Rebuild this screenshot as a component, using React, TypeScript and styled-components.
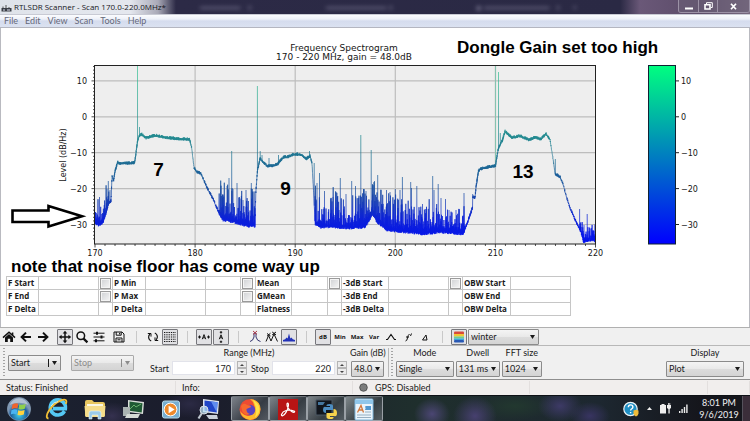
import React, { ReactNode } from "react";
import styled, { createGlobalStyle, css } from "styled-components";

const GlobalStyle = createGlobalStyle`
  * { box-sizing: border-box; }
  body { margin: 0; background: #fff; font-family: Lato, "Open Sans", sans-serif; font-size: 9px; color: #1a1a1a; }
  button, input, select { font: inherit; color: inherit; }
`;

/* ---------- shell ---------- */

const Shell = styled.div`
  display: flex;
  flex-direction: column;
  min-height: 100vh;
`;

const TitleBar = styled.header`
  position: relative;
  display: flex;
  align-items: center;
  height: 15px;
  overflow: hidden;
  background: linear-gradient(90deg, #dfe3ea 0, #e4e7ee 130px, #a9a9b7 158px, #2c2a46 176px, #2a2944 620px, #6a5878 640px, #5b4b68 700px, #77687e 100%);
  border-bottom: 1px solid #c8cad4;
`;

const AppTitle = styled.h1`
  position: relative;
  display: flex;
  align-items: center;
  gap: 2px;
  margin: 0 0 0 1px;
  font: 400 8px "Open Sans", "Noto Sans", sans-serif;
  line-height: 14px;
  color: #16161c;
  white-space: nowrap;
`;

const Backdrop = styled.div`
  position: absolute;
  inset: 0;
  display: grid;
  grid-template-columns: 200px 126px 150px 1fr;
  align-items: center;
  color: #a9a6c0;
  filter: blur(2px);
  opacity: 0.65;
  white-space: nowrap;
`;

const WindowButtons = styled.div`
  position: relative;
  display: flex;
  align-self: flex-start;
  margin-left: auto;
  height: 13px;
  border: 1px solid #9c92a6;
  border-top: 0;
  border-radius: 0 0 3px 3px;
`;

const WindowButton = styled.button<{ $wide?: boolean }>`
  display: grid;
  place-items: center;
  width: ${(p) => (p.$wide ? 32 : 19)}px;
  padding: 0;
  border: 0;
  border-left: 1px solid #9c92a6;
  background: rgba(110, 100, 122, 0.5);
  color: #fff;
  &:first-child { border-left: 0; }
`;

const MenuBar = styled.nav`
  display: flex;
  gap: 7px;
  align-items: center;
  height: 13px;
  padding-left: 4px;
  background: linear-gradient(#fbfcfe 0, #eef1f9 4px, #d5dcee 6px, #dbe2f1 100%);
  border-bottom: 1px solid #b4b6c0;
`;

const MenuItem = styled.button`
  padding: 0;
  border: 0;
  background: none;
  line-height: 12px;
  color: #66697a;
`;

const Main = styled.main`
  display: flex;
  flex-direction: column;
  flex: 1;
  padding-bottom: 11px;
  box-shadow: inset 1px 0 #b9bac0, inset -1px 0 #b9bac0;
`;

/* ---------- spectrum chart ---------- */

const Chart = styled.svg`
  display: block;
  width: 100%;
  height: auto;
  font-family: "DejaVu Sans", sans-serif;
  fill: #151515;
  .tick { font-size: 8px; }
  .title { font-size: 9px; }
  .note { font-family: "Liberation Sans", Arial, sans-serif; font-weight: 700; fill: #000; }
`;

const envelope: [number, number][] = [
  [95, 222], [98, 224], [102, 223], [105, 216], [108, 204], [111, 201], [112, 176], [113.5, 181], [115, 171],
  [117.7, 162], [119, 163.5], [134.5, 163], [136, 153], [137.5, 141], [139, 136.5], [141.5, 134.5], [146, 138],
  [155, 135.5], [165, 137.5], [177, 139], [189.5, 139.5], [191.5, 147], [194, 168], [197, 172], [201, 174],
  [207, 188], [213, 199], [218, 211], [223, 219], [230, 220], [240, 223], [248, 225], [255, 225], [255.7, 193],
  [257.5, 170], [260, 159], [263, 162], [267, 166], [273, 166], [278, 164], [280, 161], [284, 157], [288, 157],
  [293, 154.5], [300, 154.5], [304, 157], [306.5, 159], [310, 156], [312, 164], [314, 200], [315, 223], [320, 226],
  [330, 226], [350, 227], [365, 226], [370, 218], [372.5, 213], [377, 221], [387, 229], [405, 231], [423, 233],
  [440, 231], [463, 233], [467, 224], [470, 215], [472.5, 208], [472.7, 197], [475, 198], [476, 187], [478.5, 171],
  [481, 169], [487, 167.5], [495.5, 166], [497, 156], [498.5, 148], [502.5, 140], [505, 131.5], [508, 134],
  [511.5, 138], [519.5, 136], [529, 140], [535.5, 137.5], [540.5, 139.5], [546, 134], [550, 140], [552.7, 157],
  [555, 174], [560, 177], [563, 184], [565, 192], [567, 199], [570, 208], [576.5, 223], [580.5, 231], [583.5, 241],
  [589, 239], [595.5, 240],
];

const spikes: [number, number][] = [
  [99.5, 197], [107, 189], [108.3, 181], [110, 190], [137.5, 66], [139.5, 127], [222.5, 198], [227, 186], [229, 178],
  [231.7, 151], [233, 189], [237, 183], [243, 200], [246, 190], [251.3, 183], [252.5, 189], [257.4, 86], [260.2, 151],
  [262, 155], [269, 158], [278.5, 155], [309.5, 151], [314.2, 163], [317, 183], [319.5, 173], [324.5, 191],
  [333, 197], [336, 192], [340.3, 178], [346, 194], [351.7, 181], [355.5, 186], [360.8, 135], [366, 191], [371.2, 150],
  [374.5, 181], [377.7, 175], [381, 190], [386.5, 190], [390, 192], [395.3, 189], [400, 190], [402.4, 177],
  [410.7, 182], [411.5, 188], [416.8, 186], [422.5, 204], [432.7, 176], [434, 190], [438.2, 184], [441, 198],
  [445.5, 199], [449, 210], [456, 210], [464, 193], [472.7, 194], [498.5, 72], [500.3, 133], [555.3, 159],
  [579.6, 209], [584, 225], [587.2, 214], [591, 229], [594, 231],
];

const noiseZones: [number, number, number][] = [
  [95, 109, 17], [219, 255, 24], [315, 400, 25], [400, 440, 22], [440, 465, 17], [580, 596, 10],
];

function baseAt(x: number) {
  for (let i = 1; i < envelope.length; i++) {
    const [x0, y0] = envelope[i - 1];
    const [x1, y1] = envelope[i];
    if (x <= x1) return y0 + ((y1 - y0) * (x - x0)) / (x1 - x0);
  }
  return 240;
}

function buildTrace() {
  let seed = 1907;
  const rand = () => {
    seed = (seed * 16807) % 2147483647;
    return seed / 2147483647;
  };
  const parts: string[] = [];
  for (let x = 95; x <= 595.5; x += 0.3) {
    const base = baseAt(x);
    const zone = noiseZones.find(([a, b]) => x >= a && x < b);
    const lift = zone ? Math.pow(rand(), 3.6) * zone[2] * 1.4 + rand() * 5 : rand() * 2;
    const drop = zone ? rand() * 2.5 : rand() * 1.4;
    parts.push(`${x.toFixed(1)},${(base - lift).toFixed(1)} ${(x + 0.1).toFixed(1)},${(base + drop).toFixed(1)}`);
  }
  return parts.join(" ");
}

const trace = buildTrace();
const levels = [10, 0, -10, -20, -30];
const levelY = (v: number) => 116.8 - v * 3.59;
const freqX = (f: number) => 95 + (f - 170) * 10.01;
const minus = (v: number) => String(v).replace("-", "\u2212");

function SpectrumChart() {
  const minorX = Array.from({ length: 51 }, (_, i) => 170 + i);
  const minorY = Array.from({ length: 49 }, (_, i) => 14 - i);
  return (
    <Chart viewBox="0 28 750 248" role="img" aria-label="Frequency spectrogram, 170 to 220 MHz">
      <defs>
        <linearGradient id="scale" x1="0" y1="0" x2="0" y2="1">
          <stop offset="0" stopColor="#00ff80" />
          <stop offset="1" stopColor="#0000ff" />
        </linearGradient>
        <linearGradient id="trace" gradientUnits="userSpaceOnUse" x1="0" y1="65" x2="0" y2="244">
          <stop offset="0" stopColor="#3cc796" />
          <stop offset="0.4" stopColor="#21898f" />
          <stop offset="0.55" stopColor="#1b6a92" />
          <stop offset="0.72" stopColor="#1647a4" />
          <stop offset="0.86" stopColor="#0a1fd8" />
          <stop offset="1" stopColor="#0210f0" />
        </linearGradient>
      </defs>

      <rect x="94.5" y="65.5" width="501" height="178.5" fill="#eeeeee" />
      <g stroke="#bdbdbd" strokeWidth="1.2">
        {[180, 190, 200, 210].map((f) => <line key={f} x1={freqX(f)} x2={freqX(f)} y1="66" y2="244" />)}
        {levels.map((v) => <line key={v} x1="95" x2="595" y1={levelY(v)} y2={levelY(v)} />)}
      </g>
      <line x1="495.6" x2="495.6" y1="66" y2="166" stroke="#7fc4ae" />
      <g stroke="url(#trace)" fill="none">
        <g strokeWidth="0.9" opacity="0.8">
          {spikes.map(([x, y]) => (
            <path key={x} d={`M${x} ${y}L${x + 0.05} ${baseAt(x) + 1}`} />
          ))}
        </g>
        <polyline points={trace} strokeWidth="0.7" />
      </g>
      <g stroke="#222" strokeWidth="0.8">
        {minorX.map((f) => <line key={f} x1={freqX(f)} x2={freqX(f)} y1="244" y2={f % 10 ? 246 : 247.5} />)}
        {minorY.map((v) => <line key={v} x1={v % 10 ? 93 : 91.5} x2="95" y1={levelY(v)} y2={levelY(v)} />)}
      </g>
      <rect x="94.5" y="65.5" width="501" height="178.5" fill="none" stroke="#222" />

      <g className="tick" textAnchor="end">
        {levels.map((v) => <text key={v} x="87" y={levelY(v) + 3}>{minus(v)}</text>)}
      </g>
      <g className="tick" textAnchor="middle">
        {[170, 180, 190, 200, 210, 220].map((f) => <text key={f} x={freqX(f)} y="256">{f}</text>)}
        <text transform="translate(66 155) rotate(-90)">Level (dB/Hz)</text>
      </g>
      <g className="title" textAnchor="middle">
        <text x="344" y="51">Frequency Spectrogram</text>
        <text x="344" y="60">170 - 220 MHz, gain = 48.0dB</text>
      </g>

      <rect x="648.5" y="65.5" width="27" height="178.5" fill="url(#scale)" stroke="#123" />
      {levels.map((v) => (
        <g key={v} className="tick">
          <line x1="676" x2="679" y1={levelY(v)} y2={levelY(v)} stroke="#222" />
          <text x="681" y={levelY(v) + 3}>{minus(v)}</text>
        </g>
      ))}

      <g className="note">
        <text x="457" y="53" fontSize="17">Dongle Gain set too high</text>
        <text x="11" y="272" fontSize="17">note that noise floor has come way up</text>
        <text x="158.5" y="176" fontSize="19" textAnchor="middle">7</text>
        <text x="285.5" y="195" fontSize="19" textAnchor="middle">9</text>
        <text x="523" y="178" fontSize="19" textAnchor="middle">13</text>
      </g>
      <path d="M12.5 210.5H48.5V206L82 216.3L48.5 226.5V222H12.5Z" fill="none" stroke="#000" strokeWidth="2.6" />
    </Chart>
  );
}

/* ---------- measurement table ---------- */

const MeasureTable = styled.table`
  table-layout: fixed;
  width: 564px;
  margin-left: 6px;
  border-collapse: collapse;
  font: 700 8px "Open Sans", "Noto Sans", sans-serif;
  line-height: 10px;
  td, th { height: 13px; padding: 0 0 0 1px; border: 1px solid #c6c6c6; text-align: left; white-space: nowrap; }
`;

const Check = styled.input`
  display: block;
  appearance: none;
  width: 11px;
  height: 11px;
  margin: 0;
  border: 1px solid #9a9a9a;
  background: linear-gradient(135deg, #cfd1d4, #f6f6f6);
  box-shadow: inset 0 0 0 1px #f4f4f4;
`;

const columns = [32, 60, 14, 33, 60, 35, 15, 36, 36, 14, 47, 60, 14, 48, 60];
const measures: { name: string; check: boolean }[][] = [
  [{ name: "F Start", check: false }, { name: "P Min", check: true }, { name: "Mean", check: true }, { name: "-3dB Start", check: true }, { name: "OBW Start", check: true }],
  [{ name: "F End", check: false }, { name: "P Max", check: true }, { name: "GMean", check: true }, { name: "-3dB End", check: false }, { name: "OBW End", check: false }],
  [{ name: "F Delta", check: false }, { name: "P Delta", check: false }, { name: "Flatness", check: false }, { name: "-3dB Delta", check: false }, { name: "OBW Delta", check: false }],
];

function Measurements() {
  return (
    <MeasureTable>
      <colgroup>{columns.map((w, i) => <col key={i} style={{ width: w }} />)}</colgroup>
      <tbody>
        {measures.map((row) => (
          <tr key={row[0].name}>
            {row.map((m, i) => (
              <React.Fragment key={m.name}>
                {i > 0 && <td>{m.check && <Check type="checkbox" aria-label={m.name} />}</td>}
                <th scope="row">{m.name}</th>
                <td />
                {i === 1 && <td />}
              </React.Fragment>
            ))}
          </tr>
        ))}
      </tbody>
    </MeasureTable>
  );
}

/* ---------- tool bar ---------- */

const ToolBar = styled.div`
  display: flex;
  align-items: center;
  gap: 1px;
  height: 18px;
  padding-left: 1px;
  background: #f0f0f0;
  border-top: 1px solid #b0b0b0;
`;

const ToolButton = styled.button<{ $on?: boolean }>`
  display: grid;
  place-items: center;
  width: 16px;
  height: 16px;
  padding: 0;
  border: 1px solid transparent;
  background: none;
  color: #111;
  font: 700 6px "Open Sans", "Noto Sans", sans-serif;
  line-height: 8px;
  ${(p) => p.$on && css`
    border-color: #77777c;
    border-radius: 1px;
    background: #e1e1e4;
  `}
`;

const Spacer = styled.span<{ $w: number }>`
  width: ${(p) => p.$w}px;
`;

const Divider = styled.span`
  width: 16px;
  height: 12px;
  background: linear-gradient(#c9c9c9, #c9c9c9) center / 1px 100% no-repeat;
`;

const SelectBox = styled.span<{ $w: number }>`
  position: relative;
  display: block;
  width: ${(p) => p.$w}px;
  select {
    appearance: none;
    display: block;
    width: 100%;
    height: 16px;
    padding: 0 0 0 2px;
    border: 1px solid #8b8b8b;
    border-radius: 1px;
    background: linear-gradient(#f4f4f4, #e9e9e9 50%, #dcdcdc 51%, #d4d4d4);
    line-height: 14px;
  }
  svg { position: absolute; right: 4px; top: 6px; pointer-events: none; }
`;

function Caret() {
  return <svg width="5" height="4" viewBox="0 0 5 4"><path d="M0 0H5L2.5 4Z" fill="currentColor" /></svg>;
}

function Picker({ id, label, value, width }: { id: string; label?: string; value: string; width: number }) {
  return (
    <SelectBox $w={width}>
      <select id={id} aria-label={label} defaultValue={value}><option>{value}</option></select>
      <Caret />
    </SelectBox>
  );
}

function Glyph({ children }: { children: ReactNode }) {
  return <svg width="14" height="14" viewBox="0 0 14 14" fill="none" stroke="currentColor">{children}</svg>;
}

function Tools() {
  return (
    <ToolBar role="toolbar" aria-label="Plot tools">
      <ToolButton aria-label="Home"><Glyph><path d="M1 7.6 7 2.2 13 7.6M10.6 2.5V5" strokeWidth="1.5" /><path d="M3 7.6 7 4 11 7.6V12H8.2V8.8H5.8V12H3Z" fill="currentColor" stroke="none" /></Glyph></ToolButton>
      <ToolButton aria-label="Back"><Glyph><path d="M12 7H3M7 2.6 2.6 7 7 11.4" strokeWidth="2" /></Glyph></ToolButton>
      <ToolButton aria-label="Forward"><Glyph><path d="M2 7H11M7 2.6 11.4 7 7 11.4" strokeWidth="2" /></Glyph></ToolButton>
      <Spacer $w={4} />
      <ToolButton $on aria-label="Pan"><Glyph><path d="M7 3V11M3 7H11" strokeWidth="1.5" /><path d="M7 .8 9.3 3.6H4.7ZM7 13.2 9.3 10.4H4.7ZM.8 7 3.6 4.7V9.3ZM13.2 7 10.4 4.7V9.3Z" fill="currentColor" stroke="none" /></Glyph></ToolButton>
      <ToolButton aria-label="Zoom"><Glyph><circle cx="5.8" cy="5.8" r="3.8" strokeWidth="1.5" /><path d="M8.6 8.6 12.4 12.4" strokeWidth="2.2" /></Glyph></ToolButton>
      <ToolButton aria-label="Configure"><Glyph><path d="M1.5 3.2H12.5M1.5 7H12.5M1.5 10.8H12.5" /><path d="M5 1.7V4.7M9.5 5.5V8.5M4 9.3V12.3" strokeWidth="2" /></Glyph></ToolButton>
      <Spacer $w={2} />
      <ToolButton aria-label="Save"><Glyph><path d="M2 2H10L12 4V12H2ZM4.2 2V5.2H9.2V2M4 12V8H10V12M7.6 2.8V4.4M5.5 9.8H8.5" /></Glyph></ToolButton>
      <Divider />
      <ToolButton aria-label="Refresh"><Glyph><path d="M4 4A4.2 4.2 0 0 0 5.2 11M10 10A4.2 4.2 0 0 0 8.8 3" strokeWidth="1.2" /><path d="M1.8 3.5H5V6.6M12.2 10.5H9V7.4" /></Glyph></ToolButton>
      <ToolButton $on aria-label="Grid"><Glyph><path d="M1 2.5H13M1 4.8H13M1 7H13M1 9.3H13M1 11.5H13" strokeDasharray="1.3 1" /></Glyph></ToolButton>
      <Divider />
      <ToolButton $on aria-label="Auto range horizontally"><Glyph><path d="M1 7H4M10 7H13M2.5 5.5V8.5M11.5 5.5V8.5M5.3 9.2 7 4.6 8.7 9.2M6 7.8H8" /></Glyph></ToolButton>
      <ToolButton $on aria-label="Auto range vertically"><Glyph><path d="M5.3 9.2 7 4.8 8.7 9.2M6 7.8H8M7 1V3.6M5.8 2.3H8.2M7 10.6V13M5.8 11.8H8.2" /></Glyph></ToolButton>
      <Divider />
      <ToolButton aria-label="Peak"><Glyph><path d="M2 11.5Q5 11 6 7V3H8V7Q9 11 12.5 11.5" stroke="#34346e" /><path d="M5 1 9 4.5M9 1 5 4.5" stroke="#b03c4c" /></Glyph></ToolButton>
      <ToolButton aria-label="Peaks"><Glyph><path d="M1 11.5 3.6 5.5 6 11 9 4 12.5 11.5M2 3.5 5.5 6M5.5 3.2 2 6.2M7.2 2 11 4.8M11 2 7.2 4.8" /></Glyph></ToolButton>
      <ToolButton $on aria-label="Fill"><Glyph><path d="M1 11.5V10Q3.5 9.8 4.6 7.5L5.6 8.6 7 3.6 8.4 8.6 9.4 7.5Q10.5 9.8 13 10V11.5Z" fill="#2232b8" stroke="none" /></Glyph></ToolButton>
      <Divider />
      <ToolButton $on>dB</ToolButton>
      <ToolButton>Min</ToolButton>
      <ToolButton>Max</ToolButton>
      <ToolButton>Var</ToolButton>
      <ToolButton aria-label="Smooth"><Glyph><path d="M2 9.5H3.5L7 4.5 10.5 9.5H12" strokeWidth="1.2" /></Glyph></ToolButton>
      <ToolButton aria-label="Differentiate"><Glyph><path d="M4.5 11Q6 11 6.5 8T8.5 4M5 7H8M10.5 3.5 9.5 6" /></Glyph></ToolButton>
      <ToolButton aria-label="Delta"><Glyph><path d="M4.5 10 8 5 9 10Z" /></Glyph></ToolButton>
      <Divider />
      <ToolButton $on aria-label="Colour map">
        <Glyph>
          <rect x="2" y="1.5" width="10" height="3" rx="1" fill="#d84a3a" stroke="none" />
          <rect x="2" y="4" width="10" height="2.5" fill="#f2c636" stroke="none" />
          <rect x="2" y="6.5" width="10" height="2" fill="#6fd08c" stroke="none" />
          <rect x="2" y="8.5" width="10" height="1.6" fill="#39a7dc" stroke="none" />
          <rect x="2" y="10" width="10" height="2.4" rx="1" fill="#2858b4" stroke="none" />
        </Glyph>
      </ToolButton>
      <Picker id="cmap" label="Colour map name" value="winter" width={71} />
    </ToolBar>
  );
}

/* ---------- scan controls ---------- */

const Controls = styled.div`
  display: flex;
  align-items: stretch;
  height: 35px;
  padding-right: 6px;
  background: #f0f0f0;
  border-top: 1px solid #b8b8b8;
  border-bottom: 1px solid #8e8e8e;
`;

const Grip = styled.span<{ $line?: boolean }>`
  width: 6px;
  margin: 2px 0;
  border-left: 1px solid ${(p) => (p.$line ? "#b8b8b8" : "transparent")};
  background: repeating-linear-gradient(#a4a4a4 0 1px, transparent 1px 3px) 2px 0 / 2px 100% no-repeat;
`;

const SplitButton = styled.button<{ $w: number }>`
  display: flex;
  align-items: center;
  align-self: center;
  width: ${(p) => p.$w}px;
  height: 16px;
  margin: 0 8px 0 2px;
  padding: 0 3px 0 2px;
  border: 1px solid #8b8b8b;
  border-radius: 1px;
  background: linear-gradient(#f4f4f4, #e9e9e9 50%, #dcdcdc 51%, #d4d4d4);
  line-height: 14px;
  &:disabled { color: #8c8c8c; border-color: #a9a9a9; }
  i { width: 1px; height: 8px; margin: 0 3px 0 auto; background: currentColor; }
`;

const Field = styled.div<{ $push?: boolean }>`
  display: flex;
  flex-direction: column;
  gap: 3px;
  align-items: center;
  margin-left: ${(p) => (p.$push ? "auto" : "2px")};
  padding-top: 1px;
  line-height: 11px;
  white-space: nowrap;
`;

const RangeGroup = styled.div`
  display: flex;
  flex-direction: column;
  gap: 3px;
  margin-left: 8px;
  padding-top: 1px;
  line-height: 11px;
`;

const RangeTitle = styled.span`
  align-self: center;
`;

const RangeRow = styled.div`
  display: flex;
  align-items: center;
  gap: 3px;
`;

const NumberBox = styled.span`
  display: flex;
  align-items: center;
  gap: 2px;
  margin-right: 1px;
  input {
    width: 63px;
    height: 14px;
    padding: 0 3px;
    border: 1px solid #e2e3ea;
    background: #fff;
    text-align: right;
  }
`;

const Spin = styled.span`
  display: flex;
  flex-direction: column;
  button {
    display: grid;
    place-items: center;
    width: 10px;
    height: 7px;
    padding: 0;
    border: 1px solid #b5b5b5;
    background: #ececec;
    color: #444;
  }
`;

function SpinField({ id, label, value }: { id: string; label: string; value: string }) {
  return (
    <>
      <label htmlFor={id}>{label}</label>
      <NumberBox>
        <input id={id} type="text" inputMode="numeric" defaultValue={value} />
        <Spin>
          <button aria-label={`${label} up`}><svg width="4" height="2" viewBox="0 0 4 2"><path d="M0 2H4L2 0Z" fill="currentColor" /></svg></button>
          <button aria-label={`${label} down`}><svg width="4" height="2" viewBox="0 0 4 2"><path d="M0 0H4L2 2Z" fill="currentColor" /></svg></button>
        </Spin>
      </NumberBox>
    </>
  );
}

function LabelledPicker({ id, label, value, width, push }: { id: string; label: string; value: string; width: number; push?: boolean }) {
  return (
    <Field $push={push}>
      <label htmlFor={id}>{label}</label>
      <Picker id={id} value={value} width={width} />
    </Field>
  );
}

function ScanControls() {
  return (
    <Controls>
      <Grip />
      <SplitButton $w={53}>Start<i /><Caret /></SplitButton>
      <SplitButton $w={63} disabled>Stop<i /><Caret /></SplitButton>
      <RangeGroup role="group" aria-label="Range (MHz)">
        <RangeTitle>Range (MHz)</RangeTitle>
        <RangeRow>
          <SpinField id="from" label="Start" value="170" />
          <SpinField id="to" label="Stop" value="220" />
        </RangeRow>
      </RangeGroup>
      <LabelledPicker id="gain" label="Gain (dB)" value="48.0" width={33} />
      <Spacer $w={2} />
      <Grip $line />
      <LabelledPicker id="mode" label="Mode" value="Single" width={58} />
      <LabelledPicker id="dwell" label="Dwell" value="131 ms" width={44} />
      <LabelledPicker id="fft" label="FFT size" value="1024" width={40} />
      <LabelledPicker id="display" label="Display" value="Plot" width={78} push />
    </Controls>
  );
}

/* ---------- status bar ---------- */

const StatusBar = styled.footer`
  display: grid;
  grid-template-columns: 176px 177px 177px 1fr 42px;
  align-items: center;
  height: 15px;
  background: #f1eeed;
  line-height: 13px;
  > span { display: flex; align-items: center; gap: 7px; height: 13px; padding-left: 6px; border-right: 1px solid #e3dfde; }
`;

/* ---------- task bar ---------- */

const TaskBar = styled.div`
  display: flex;
  align-items: center;
  height: 26px;
  overflow: hidden;
  background:
    radial-gradient(ellipse 18px 16px at 432px 18px, #4b4673, transparent),
    radial-gradient(ellipse 22px 20px at 475px 20px, #47406f, transparent),
    radial-gradient(ellipse 22px 16px at 560px 10px, #3d3a66, transparent),
    radial-gradient(ellipse 20px 14px at 590px 20px, #383461, transparent),
    radial-gradient(ellipse 20px 14px at 112px 20px, #35314f, transparent),
    radial-gradient(ellipse 26px 14px at 190px 8px, #2b2a44, transparent),
    radial-gradient(ellipse 40px 14px at 515px 10px, #22382f, transparent),
    linear-gradient(90deg, #1b2230, #1b1c2c 200px, #1f2f2d 420px, #1d2730 600px, #15161c 700px);
  border-top: 1px solid #0e1116;
`;

const TaskButton = styled.button<{ $open?: boolean }>`
  display: grid;
  place-items: center;
  width: 38px;
  height: 25px;
  padding: 0;
  border: 0;
  background: none;
  ${(p) => p.$open && css`
    border: 1px solid #9aa0a6;
    border-radius: 2px;
    border-top-color: #6d7277;
    background: linear-gradient(135deg, rgba(190, 196, 200, 0.6), rgba(70, 76, 82, 0.6) 60%, rgba(120, 126, 132, 0.6));
  `}
`;

const Tray = styled.div`
  display: flex;
  align-items: center;
  gap: 8px;
  height: 100%;
  margin-left: auto;
  color: #eee;
`;

const Clock = styled.time`
  display: flex;
  flex-direction: column;
  align-items: center;
  width: 46px;
  line-height: 12px;
  color: #f0f0f2;
`;

const ShowDesktop = styled.button`
  width: 8px;
  height: 100%;
  padding: 0;
  border: 0;
  border-left: 1px solid #55525c;
  background: #3b2e3a;
`;

function TaskIcon({ children }: { children: ReactNode }) {
  return <svg width="24" height="24" viewBox="0 0 24 24">{children}</svg>;
}

function Tasks() {
  return (
    <TaskBar>
      <TaskButton aria-label="Start menu">
        <TaskIcon>
          <defs><radialGradient id="orb" cy=".75"><stop offset="0" stopColor="#3fd0ee" /><stop offset=".7" stopColor="#1d5f9e" /><stop offset="1" stopColor="#7d97b4" /></radialGradient></defs>
          <circle cx="12" cy="12" r="11.6" fill="url(#orb)" stroke="#8fa6bd" strokeWidth=".6" />
          <path d="M5.5 7.5Q8.5 5.5 11.3 6.8L10.5 11.6Q7.5 10.5 4.6 12.2Z" fill="#f0632c" />
          <path d="M12.3 7.2Q15.5 8.5 18.8 7L17.8 11.8Q14.8 13.2 11.5 12Z" fill="#8fd04b" />
          <path d="M4.4 13.2Q7.4 11.6 10.3 12.8L9.5 17.4Q6.5 16.2 3.8 17.5Z" fill="#4ab4f2" />
          <path d="M11.3 13.2Q14.6 14.3 17.6 13L16.8 17.6Q13.6 19 10.5 17.8Z" fill="#ffd23e" />
          <path d="M2.5 8Q6 1.4 12 1.3T21.5 8Q12 3.6 2.5 8Z" fill="#fff" opacity=".4" />
        </TaskIcon>
      </TaskButton>
      <TaskButton aria-label="Internet Explorer">
        <TaskIcon>
          <path d="M19.5 14.2A7.6 7.6 0 1 1 20.4 11.6H8" fill="none" stroke="#55c8f4" strokeWidth="3.6" />
          <path d="M3.5 21.5C-2 20.5 6.5 7.2 15 3.8 20.5 1.6 22.5 2.8 20.8 7" fill="none" stroke="#f1bf36" strokeWidth="1.8" />
          <path d="M6 9Q8 5 13 4.6" stroke="#c9f0fc" fill="none" />
        </TaskIcon>
      </TaskButton>
      <TaskButton aria-label="File Explorer">
        <TaskIcon>
          <path d="M2 5Q2 3 4 3H9L11 5H20Q22 5 22 7V19H2Z" fill="#e9c760" />
          <path d="M4 7H20V12H4Z" fill="#fbf7e4" /><path d="M1.5 9H22.5L21.5 20H2.5Z" fill="#f6dd8b" />
          <path d="M6 22V16Q6 14 8 14H16Q18 14 18 16V22H15V18H9V22Z" fill="#9ccbe8" stroke="#e8f5fc" strokeWidth=".6" />
        </TaskIcon>
      </TaskButton>
      <TaskButton aria-label="Remote monitor">
        <TaskIcon>
          <path d="M7 3 23 5 22 17 7 15Z" fill="#d9ded9" /><path d="M8.5 4.5 21.5 6.3 20.7 15.5 8.5 13.8Z" fill="#1f5a34" />
          <path d="M9 12 13 8 15 10 20 7" stroke="#68b06c" fill="none" /><path d="M2 10H9V19H2Z" fill="#aab3b2" /><path d="M6 17H19L17 21H4Z" fill="#d5dad6" />
        </TaskIcon>
      </TaskButton>
      <TaskButton aria-label="Media Player">
        <TaskIcon>
          <rect x="3.5" y="4" width="17" height="17" rx="2" fill="#77aed0" stroke="#b9dcec" /><circle cx="11.5" cy="12.5" r="6.4" fill="#ee8a2c" stroke="#fff" />
          <path d="M9.6 8.8V16.2L15.6 12.5Z" fill="#fff" />
        </TaskIcon>
      </TaskButton>
      <TaskButton aria-label="Display viewer">
        <TaskIcon>
          <path d="M6 2 22 4 21 17 6 15Z" fill="#dfe5ee" /><path d="M7.5 3.6 20.6 5.2 19.8 15.4 7.5 13.8Z" fill="#2146c8" /><path d="M14 4.4 20.6 5.2 19.8 15.4Z" fill="#5f8cf0" />
          <path d="M9 18H20L21 22H12Z" fill="#c9d0da" /><circle cx="7" cy="13" r="4" fill="#b8dcf0" fillOpacity=".75" stroke="#d7dee6" /><path d="M5 16 1.5 21.5" stroke="#c0c8d0" strokeWidth="2.2" />
        </TaskIcon>
      </TaskButton>
      <Spacer $w={3} />
      <TaskButton $open aria-label="Firefox">
        <TaskIcon>
          <circle cx="12" cy="12.5" r="10.5" fill="#ee4b32" /><path d="M12 2Q22 3 22.5 12 22 22 12 23 4 22 2 14 8 21 13 18 19 14 16 8 15 4 12 2Z" fill="#fdb82c" />
          <path d="M15 3Q21 6 21.5 12 21 18 17 20.5 20 12 15 3Z" fill="#ffe14a" /><circle cx="12" cy="13" r="5.2" fill="#5a43c0" /><path d="M3 9Q6 5 9 8 13 8 13 10L8.5 12Q8 16 12 17 7 19 4.5 15Z" fill="#f7682e" />
        </TaskIcon>
      </TaskButton>
      <TaskButton $open aria-label="Acrobat Reader">
        <TaskIcon>
          <rect x="2" y="2" width="20" height="21" fill="#b81414" />
          <path d="M5.5 17.5C7 13.5 12 12 18.5 14.2 19.5 16.5 14 15.5 11.3 9.5 10 5 13 5 12.4 8.8 12 12.5 8.8 18.6 6.5 18.8 5.5 18.8 5.3 18 5.5 17.5Z" fill="none" stroke="#fff" strokeWidth="1.2" />
        </TaskIcon>
      </TaskButton>
      <TaskButton $open aria-label="Python">
        <TaskIcon>
          <path d="M2 3H18V18H2Z" fill="#11151c" stroke="#4b5663" /><path d="M4 5H11L9 8H4Z" fill="#44769e" />
          <path d="M15.5 7Q19 7 19 9V13H12V16Q9 16 9 12.5T12 10H16V9H12.5Q12 7 15.5 7Z" fill="#4d8cc0" />
          <path d="M16.5 22Q12.5 22 12.5 20V16H19.5V12Q23 12 23 16T20 19H16V20H19.5Q20 22 16.5 22Z" fill="#f7d34c" />
        </TaskIcon>
      </TaskButton>
      <TaskButton $open aria-label="WordPad">
        <TaskIcon>
          <rect x="3" y="2" width="18" height="21" rx="1" fill="#eaf4fb" stroke="#7fb6dc" /><path d="M3 3H21V7H3Z" fill="#8fc6ea" />
          <path d="M5.5 15.5 9 8.5 11.5 15.5M7 13H10.6" fill="none" stroke="#d1783e" strokeWidth="1.3" />
          <path d="M13 10H19M13 12.5H19M13 15H19M5 18H19M5 20.5H19" stroke="#8da6ba" strokeWidth=".9" /><rect x="13.5" y="9" width="5.5" height="4" fill="#4f97cf" />
        </TaskIcon>
      </TaskButton>
      <Tray>
        <svg width="16" height="16" viewBox="0 0 16 16" aria-label="Help"><circle cx="7.5" cy="8" r="6.7" fill="#1f8fc4" stroke="#eef4f6" strokeWidth="1.2" /><path d="M5.3 6.2Q5.4 3.9 7.6 3.9T9.9 6Q9.9 7.2 8.5 8 7.6 8.6 7.6 9.6M7.6 11V12.3" fill="none" stroke="#fff" strokeWidth="1.4" /><path d="M10.5 9.5 13 8.8 15.5 9.5V12.5Q15 14.8 13 15.6 11 14.8 10.5 12.5Z" fill="#f0bd3a" /></svg>
        <svg width="5" height="3" viewBox="0 0 5 3"><path d="M0 3H5L2.5 0Z" fill="currentColor" /></svg>
        <svg width="11" height="11" viewBox="0 0 11 11" fill="currentColor"><path d="M0 2H1.5V1H4.5V2H6V10.5H0ZM7 2H8V0H8.8V2H9.4V0H10.2V2H11V5L9.7 6V10.5H8.4V6L7 5Z" /></svg>
        <svg width="9" height="9" viewBox="0 0 9 9" fill="currentColor"><path d="M0 7H1.4V9H0ZM2.4 5H3.8V9H2.4ZM4.8 3H6.2V9H4.8ZM7.2 .5H8.6V9H7.2Z" /></svg>
        <Clock><span>8:01 PM</span><span>9/6/2019</span></Clock>
      </Tray>
      <ShowDesktop aria-label="Show desktop" />
    </TaskBar>
  );
}

/* ---------- page ---------- */

export default function App() {
  return (
    <Shell>
      <GlobalStyle />
      <TitleBar>
        <Backdrop aria-hidden="true">
          <span /><span>━━━━━━━━ &nbsp; ×</span><span>━━━━━━━━━━━━ ×</span><span>● ━━━━━━━━━━━━━ &nbsp; × &nbsp; &nbsp; +</span>
        </Backdrop>
        <AppTitle>
          <svg width="11" height="10" viewBox="0 0 11 10"><path d="M.5 6H10.5V9.5H.5Z" fill="#3b3f46" /><path d="M2 8H4M6 8H9" stroke="#dde" /><path d="M2 6V4.5M5 6V3M8 6V5" stroke="#555" /></svg>
          RTLSDR Scanner - Scan 170.0-220.0MHz*
        </AppTitle>
        <WindowButtons>
          <WindowButton aria-label="Minimize"><svg width="8" height="8" viewBox="0 0 8 8"><path d="M0 5.5H8V7.5H0Z" fill="currentColor" /></svg></WindowButton>
          <WindowButton aria-label="Restore"><svg width="9" height="8" viewBox="0 0 9 8" fill="none" stroke="currentColor"><path d="M2.5 2V.7H8.3V5.5H7" /><path d="M1 2.8H6V7H1Z" strokeWidth="1.6" /></svg></WindowButton>
          <WindowButton $wide aria-label="Close"><svg width="7" height="7" viewBox="0 0 7 7"><path d="M1 .7 6 6.3M6 .7 1 6.3" stroke="currentColor" strokeWidth="1.7" /></svg></WindowButton>
        </WindowButtons>
      </TitleBar>
      <MenuBar>
        {["File", "Edit", "View", "Scan", "Tools", "Help"].map((m) => <MenuItem key={m}>{m}</MenuItem>)}
      </MenuBar>
      <Main>
        <SpectrumChart />
        <Measurements />
      </Main>
      <Tools />
      <ScanControls />
      <StatusBar>
        <span>Status: Finished</span>
        <span>Info:</span>
        <span><svg width="9" height="9" viewBox="0 0 9 9"><circle cx="4.5" cy="4.5" r="3.8" fill="#7c7c7c" stroke="#444" strokeWidth=".8" /></svg>GPS: Disabled</span>
        <span />
        <span />
      </StatusBar>
      <Tasks />
    </Shell>
  );
}
